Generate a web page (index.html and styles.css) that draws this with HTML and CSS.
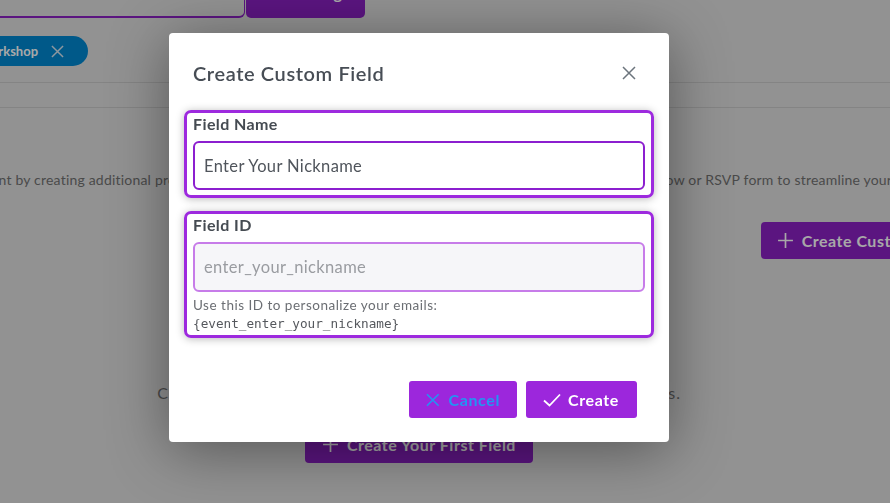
FILE: index.html
```html
<!DOCTYPE html>
<html lang="en">
<head>
<meta charset="utf-8">
<title>Create Custom Field</title>
<link rel="stylesheet" href="styles.css">
</head>
<body>
<div class="page">
  <div class="tagbar">
    <div class="tag-input"></div>
    <button class="tag-add">+ Add Tag</button>
  </div>
  <div class="chips">
    <span class="chip">Workshop
      <svg class="chip-x" viewBox="0 0 14 14" width="13" height="13"><path d="M1 1 13 13M13 1 1 13" stroke="currentColor" stroke-width="1.6" fill="none"/></svg>
    </span>
  </div>
  <div class="tabs"></div>
  <p class="desc">Enhance your event by creating additional profile fields which all of your guests are asked to fill out on the registration window or RSVP form to streamline your planning.</p>
  <div class="actions">
    <button class="btn-bg">
      <svg viewBox="0 0 16 16" width="17" height="17"><path d="M8 1v14M1 8h14" stroke="currentColor" stroke-width="1.6" fill="none"/></svg>
      Create Custom Field
    </button>
  </div>
  <div class="empty">
    <p class="empty-text">Create custom fields to collect more information from your guests.</p>
    <button class="btn-bg btn-first">
      <svg viewBox="0 0 16 16" width="17" height="17"><path d="M8 1v14M1 8h14" stroke="currentColor" stroke-width="1.6" fill="none"/></svg>
      Create Your First Field
    </button>
  </div>
</div>

<div class="overlay"></div>

<div class="modal" role="dialog">
  <div class="modal-header">
    <h2 class="modal-title">Create Custom Field</h2>
    <svg class="close" viewBox="0 0 14 14" width="14" height="14"><path d="M1 1 13 13M13 1 1 13" stroke="currentColor" stroke-width="1.5" fill="none"/></svg>
  </div>
  <div class="modal-body">
    <div class="group">
      <label class="label">Field Name</label>
      <div class="input input-name">Enter Your Nickname</div>
    </div>
    <div class="group group-id">
      <label class="label">Field ID</label>
      <div class="input input-id">enter_your_nickname</div>
      <div class="help">Use this ID to personalize your emails:</div>
      <code class="code">{event_enter_your_nickname}</code>
    </div>
  </div>
  <div class="modal-footer">
    <button class="btn btn-cancel">
      <svg viewBox="0 0 14 14" width="14" height="14"><path d="M1 1 13 13M13 1 1 13" stroke="currentColor" stroke-width="1.6" fill="none"/></svg>
      Cancel
    </button>
    <button class="btn btn-create">
      <svg viewBox="0 0 18 14" width="18" height="14"><path d="M1 7.5 6.5 12.5 17 1.5" stroke="currentColor" stroke-width="1.8" fill="none"/></svg>
      Create
    </button>
  </div>
</div>
</body>
</html>
```

FILE: styles.css
```css
* { box-sizing: border-box; }
html, body {
  margin: 0;
  padding: 0;
  width: 890px;
  height: 503px;
  overflow: hidden;
  font-family: Lato, "Open Sans", sans-serif;
}
body { background: #dedede; }

.page { width: 890px; }

.tagbar {
  display: flex;
  margin-top: -22px;
  margin-left: -120px;
  height: 40px;
}
.tag-input {
  width: 365px;
  height: 40px;
  border-bottom: 2px solid #8b20c3;
  border-right: 1px solid #8b20c3;
  border-radius: 0 0 6px 0;
}
.tag-add {
  margin-left: 1px;
  width: 119px;
  height: 40px;
  border: none;
  border-radius: 0 0 5px 5px;
  background: #8b20c3;
  color: #fff;
  font: 700 16px Lato, sans-serif;
  line-height: 19px;
  letter-spacing: 0.5px;
  display: flex;
  align-items: flex-start;
  justify-content: center;
  padding: 5px 0 0;
}

.chips { margin-top: 18px; margin-left: -38px; display: flex; }
.chip {
  display: inline-flex;
  align-items: center;
  gap: 13px;
  height: 30px;
  padding: 0 24px 0 16px;
  border-radius: 15px;
  background: #0087d1;
  color: #fff;
  font: 700 13px Lato, sans-serif;
}
.chip-x { color: #d8e6f0; }

.tabs {
  margin-top: 16px;
  height: 26px;
  border-top: 1px solid #c9c9c9;
  border-bottom: 1px solid #c9c9c9;
}

.desc {
  margin: 62px 0 0 -113px;
  white-space: nowrap;
  font-size: 14px;
  line-height: 20px;
  color: #717171;
  letter-spacing: 0.2px;
}

.actions {
  display: flex;
  justify-content: flex-end;
  margin-top: 32px;
  margin-right: -82px;
}
.btn-bg {
  display: inline-flex;
  align-items: center;
  gap: 8px;
  height: 37px;
  padding: 0 16px;
  border: none;
  border-radius: 4px;
  background: #8b20c3;
  color: #fff;
  font: 700 16px Lato, sans-serif;
  letter-spacing: 0.5px;
}

.empty {
  width: 838px;
  display: flex;
  flex-direction: column;
  align-items: center;
  margin-top: 124px;
}
.empty-text {
  margin: 0;
  font-size: 16px;
  line-height: 20px;
  color: #717171;
  white-space: nowrap;
  letter-spacing: 0.9px;
}
.btn-first { margin-top: 22px; height: 38px; padding: 0 17px; }

.overlay {
  position: fixed;
  inset: 0;
  background: rgba(0, 0, 0, 0.34);
}

.modal {
  position: absolute;
  left: 169px;
  top: 33px;
  width: 500px;
  height: 409px;
  background: #fff;
  border-radius: 4px;
  box-shadow: 0 8px 60px rgba(0, 0, 0, 0.42);
  display: flex;
  flex-direction: column;
}
.modal-header {
  display: flex;
  align-items: center;
  justify-content: space-between;
  padding: 28px 33px 0 24px;
}
.modal-title {
  margin: 0;
  font-size: 20px;
  line-height: 24px;
  font-weight: 600;
  color: #474d55;
  letter-spacing: 0.6px;
}
.close { color: #6c757d; }

.modal-body {
  padding: 25px 15px 0;
  display: flex;
  flex-direction: column;
  gap: 13px;
}
.group {
  border: 3px solid #9d2ade;
  border-radius: 7px;
  padding: 0 6px 5px;
  box-shadow: 0 1px 8px rgba(0, 0, 0, 0.28);
  display: flex;
  flex-direction: column;
}
.label {
  font-size: 16px;
  line-height: 20px;
  font-weight: 700;
  color: #454b52;
  padding-top: 1px;
  letter-spacing: 0.4px;
}
.input {
  margin-top: 7px;
  height: 49px;
  border-radius: 6px;
  padding: 0 9px;
  display: flex;
  align-items: center;
  font-size: 16.5px;
  letter-spacing: 0.35px;
}
.input-name {
  border: 2px solid #8c1fcf;
  color: #50555c;
  background: #fff;
}
.input-id {
  height: 50px;
  border: 2px solid #c77ce9;
  background: #f6f6f9;
  color: #9a9ca1;
}
.group-id { padding-bottom: 2px; }
.help {
  margin-top: 4px;
  font-size: 13.5px;
  line-height: 18px;
  color: #6b6e73;
  letter-spacing: 0.5px;
}
.code {
  font-family: "DejaVu Sans Mono", "Liberation Mono", monospace;
  font-size: 12.7px;
  line-height: 19px;
  color: #55585d;
}

.modal-footer {
  margin-top: auto;
  display: flex;
  justify-content: flex-end;
  gap: 9px;
  padding: 0 32px 24px;
}
.btn {
  display: inline-flex;
  align-items: center;
  gap: 9px;
  height: 37px;
  border: none;
  border-radius: 3px;
  background: #9c27dc;
  font: 700 16px Lato, sans-serif;
  letter-spacing: 0.6px;
}
.btn-cancel { width: 108px; padding: 0 17px; color: #2196f3; }
.btn-create { width: 111px; padding: 0 17px; color: #fff; gap: 7px; }
```
